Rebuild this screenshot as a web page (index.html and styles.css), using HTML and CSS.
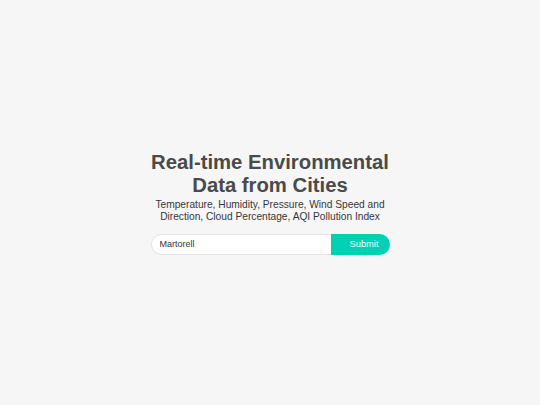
FILE: index.html
```html
<!DOCTYPE html>
<html lang="en">
<head>
<meta charset="utf-8">
<title>Real-time Environmental Data</title>
<link rel="stylesheet" href="styles.css">
</head>
<body>
<main class="page">
  <section class="hero">
    <h1 class="title">Real-time Environmental Data from Cities</h1>
    <p class="subtitle">Temperature, Humidity, Pressure, Wind Speed and Direction, Cloud Percentage, AQI Pollution Index</p>
    <form class="search">
      <input class="search-input" type="text" value="Martorell">
      <button class="search-button" type="button">Submit</button>
    </form>
  </section>
</main>
</body>
</html>
```
FILE: styles.css
```css
html, body {
  margin: 0;
  padding: 0;
  height: 100%;
}
body {
  background: #f6f6f6;
  font-family: "Liberation Sans", Arial, sans-serif;
  color: #4a4a4a;
}
.page {
  height: 100%;
  display: flex;
  align-items: center;
  justify-content: center;
}
.hero {
  width: 240px;
  display: flex;
  flex-direction: column;
  align-items: center;
  text-align: center;
}
.title {
  margin: 0;
  font-size: 20.3px;
  line-height: 23px;
  font-weight: 700;
  color: #4a4a4a;
}
.subtitle {
  margin: 2px 0 0;
  width: 240px;
  font-size: 10.2px;
  line-height: 12.5px;
  color: #363636;
}
.search {
  margin: 10px 0 0;
  width: 239px;
  display: flex;
}
.search-input {
  flex: 1;
  min-width: 0;
  height: 21px;
  box-sizing: border-box;
  border: 1px solid #e4e4e4;
  border-right: none;
  border-radius: 11px 0 0 11px;
  background: #fff;
  padding: 0 8px;
  font-family: "Liberation Sans", Arial, sans-serif;
  font-size: 9px;
  color: #363636;
  outline: none;
}
.search-button {
  width: 59px;
  height: 21px;
  border: none;
  border-radius: 0 11px 11px 0;
  background: #00d1b2;
  color: #f2fffc;
  font-family: "Liberation Sans", Arial, sans-serif;
  font-size: 9.3px;
  padding: 0 0 0 8px;
}
```
